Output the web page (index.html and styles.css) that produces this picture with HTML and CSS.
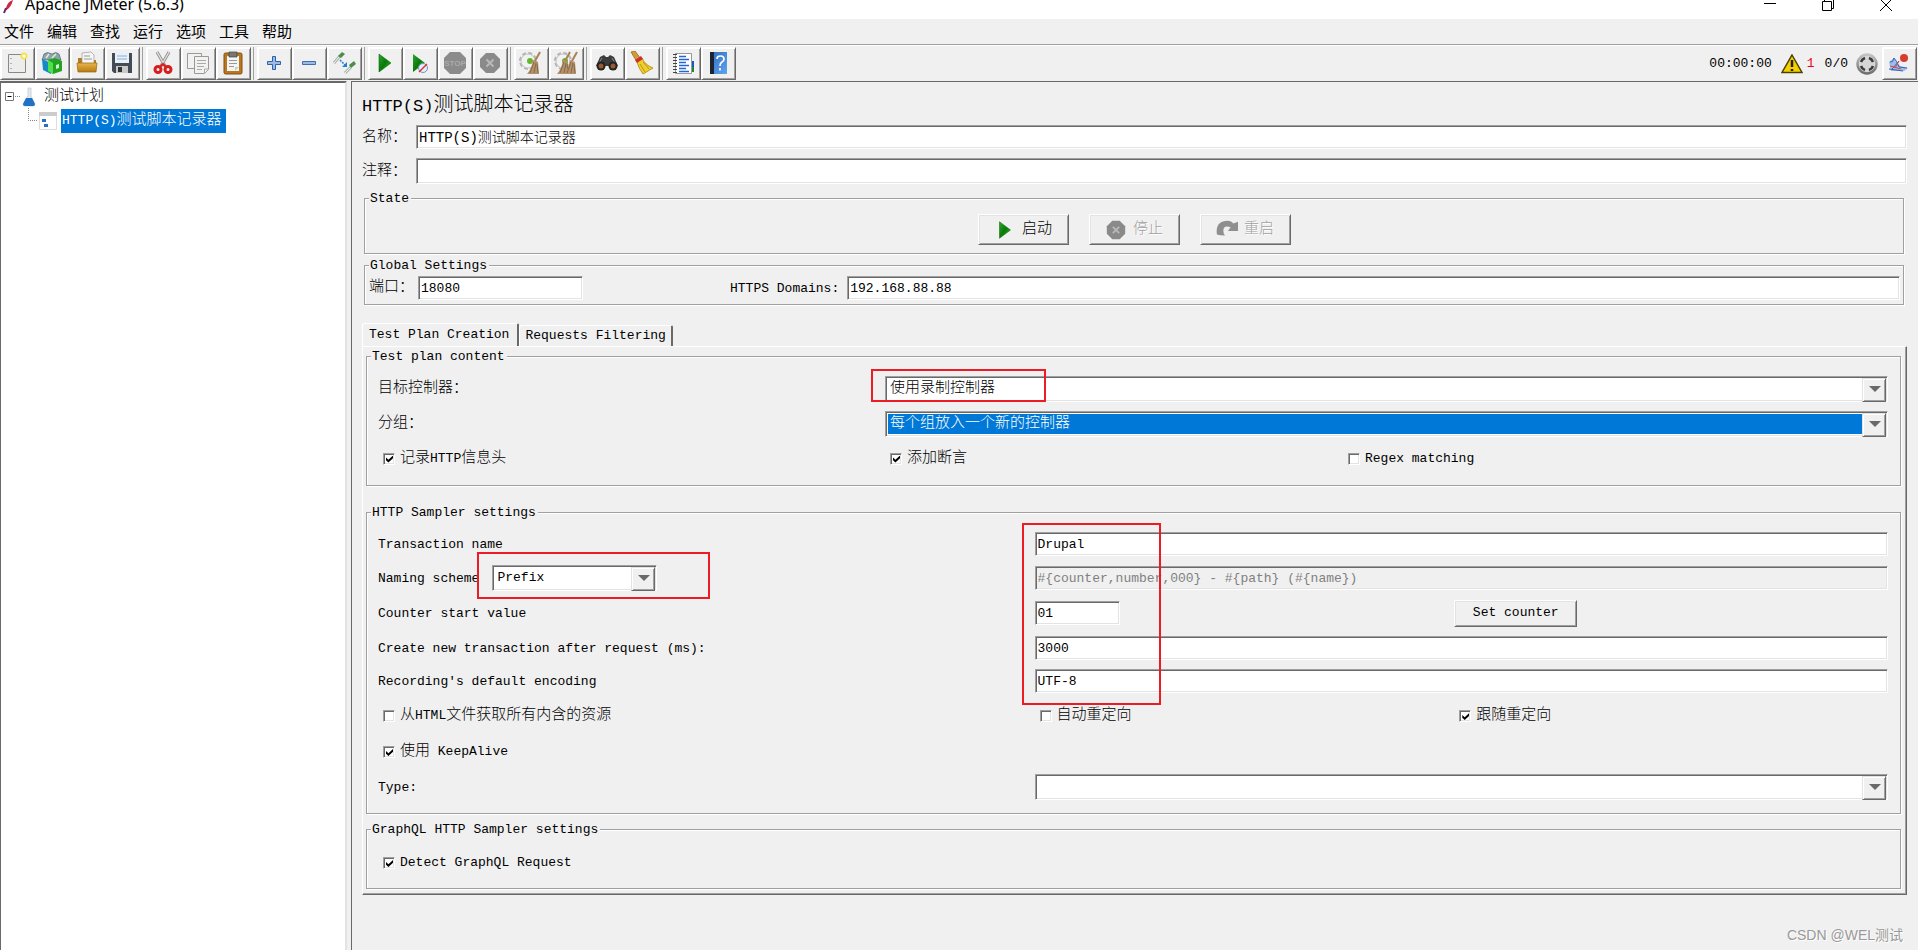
FILE: index.html
```html
<!DOCTYPE html>
<html lang="zh-CN">
<head>
<meta charset="utf-8">
<title>Apache JMeter (5.6.3)</title>
<link rel="stylesheet" href="styles.css">
</head>
<body>
<svg class="defs" aria-hidden="true">
  <defs>
    <linearGradient id="green" x1="0" y1="0" x2="1" y2="1"><stop offset="0" stop-color="#2fa52f"/><stop offset=".5" stop-color="#0a7a0a"/><stop offset="1" stop-color="#1fd01f"/></linearGradient>
    <linearGradient id="gold" x1="0" y1="0" x2="0" y2="1"><stop offset="0" stop-color="#e9b64a"/><stop offset="1" stop-color="#b67a12"/></linearGradient>
    <linearGradient id="blue" x1="0" y1="0" x2="1" y2="1"><stop offset="0" stop-color="#2f6cc0"/><stop offset="1" stop-color="#5fa4ee"/></linearGradient>
    <linearGradient id="metal" x1="0" y1="0" x2="0" y2="1"><stop offset="0" stop-color="#c4c4c4"/><stop offset="1" stop-color="#6e6e6e"/></linearGradient>
    <symbol id="play" viewBox="0 0 24 24"><path d="M6 3 18 12 6 21Z" fill="url(#green)" stroke="#0a6b0a" stroke-width=".6"/></symbol>
    <symbol id="cancel" viewBox="0 0 24 24"><path d="M8 2h8l6 6v8l-6 6H8l-6-6V8Z" fill="#8a8a8a"/><path d="m8.500 8.500 7 7m0-7-7 7" stroke="#b8b8b8" stroke-width="2"/></symbol>
    <symbol id="broom" viewBox="0 0 24 24"><path d="m21 1-5 9" stroke="#a98254" stroke-width="2"/><path d="m14 9 5 2 1 12H8q5-6 6-14Z" fill="#b3916b"/><path d="m15 11-4 11m6-10-2 10m3-9 1 9" stroke="#7d5f40" stroke-width=".8"/></symbol>
    <symbol id="gear" viewBox="0 0 24 24"><circle cx="9" cy="10" r="7" fill="none" stroke="#b4b4b4" stroke-width="4" stroke-dasharray="3.500 2"/><circle cx="9" cy="10" r="7" fill="#f2f2f2" stroke="#c4c4c4"/><circle cx="11" cy="10" r="3" fill="#6ab42d"/></symbol>
  </defs>
</svg>

<div class="window">
  <header class="titlebar">
    <svg class="feather" viewBox="0 0 12 14" aria-hidden="true"><path d="M11 0Q6 1 4 8L3 11Q9 8 11 0Z" fill="#c92a3f"/><path d="M4 8 2 13" stroke="#6a2468" stroke-width="2"/></svg>
    <span class="titlebar-text">Apache JMeter (5.6.3)</span>
    <div class="window-controls">
      <button aria-label="Minimize"><svg viewBox="0 0 14 14"><path d="M1 5.500h12"/></svg></button>
      <button aria-label="Restore"><svg viewBox="0 0 14 14"><path d="M1.500 3.500h9v9h-9ZM3.500 3.500v-2h9v9h-2"/></svg></button>
      <button aria-label="Close"><svg viewBox="0 0 14 14"><path d="m1 1 12 12m0-12L1 13"/></svg></button>
    </div>
  </header>

  <nav class="menubar">
    <button>文件</button><button>编辑</button><button>查找</button><button>运行</button><button>选项</button><button>工具</button><button>帮助</button>
  </nav>

  <div class="toolbar">
    <div class="group">
      <button class="tool" aria-label="New"><svg viewBox="0 0 24 24"><path d="M3.500 3.500h17v18h-17Z" fill="#ededeb" stroke="#888"/><path d="M6 7v12" stroke="#777" stroke-dasharray="1 4"/><circle cx="19" cy="5" r="3.500" fill="#f4e257"/><circle cx="19" cy="5" r="1.500" fill="#fff"/></svg></button>
      <button class="tool" aria-label="Templates"><svg viewBox="0 0 24 24"><path d="M4 3q3-3 8 0 4-3 7 0l2 6H2Z" fill="#8ba5a5" stroke="#456" stroke-width=".6"/><path d="m6 7 3-4m3 4 4-4" stroke="#dfeaea" stroke-width="1.500"/><path d="m2 8 9 4v11l-8-4Z" fill="#168ac4"/><path d="m8 9 7-2 7 3v10l-9 3-5-3Z" fill="#22a322"/><path d="m8 9 5 3v11l-5-3Z" fill="#4fe04f"/><path d="m16 14 3-1v4l-3 1Z" fill="#c9f6c9"/></svg></button>
      <button class="tool" aria-label="Open"><svg viewBox="0 0 24 24"><path d="M3 7h6l2 2h10v12H3Z" fill="#b67c18"/><path d="m7 2 9-1 3 3v9H7Z" fill="#f5f5f5" stroke="#999" stroke-width=".7"/><path d="M9 5h6M9 8h8" stroke="#999"/><path d="M2 12h20l-1 9H3Z" fill="url(#gold)" stroke="#97670f" stroke-width=".7"/></svg></button>
      <button class="tool" aria-label="Save"><svg viewBox="0 0 24 24"><path d="M2 2h20v20H4l-2-2Z" fill="#444b54"/><path d="M5 2h14v10H5Z" fill="#e8f1fa"/><path d="M7 5h10M7 8h10" stroke="#8aaed2"/><path d="M6 15h12v7H6Z" fill="#c9c9c9"/><path d="M8 16h4v5H8Z" fill="#333"/></svg></button>
    </div>
    <div class="group">
      <button class="tool" aria-label="Cut"><svg viewBox="0 0 24 24" fill="none"><path d="m6 1 8 14M18 1l-8 14" stroke="#8a8a8a" stroke-width="3"/><path d="m6 1 8 14M18 1l-8 14" stroke="#ddd" stroke-width="1.500"/><ellipse cx="7" cy="18.500" rx="3" ry="3" stroke="#d91d1d" stroke-width="3"/><ellipse cx="17" cy="18.500" rx="3" ry="3" stroke="#d91d1d" stroke-width="3"/><path d="m9 16 3-3 3 3" stroke="#d91d1d" stroke-width="2"/></svg></button>
      <button class="tool" aria-label="Copy"><svg viewBox="0 0 24 24" fill="#f2f2f0" stroke="#999"><path d="M1.500 2.500h14v15h-14Z"/><path d="M8.500 5.500h14v13l-4 4h-10Z"/><path d="M11 9.500h9m-9 3h9m-9 3h7m-7 3h5M18.500 22v-4h4" stroke="#aaa"/></svg></button>
      <button class="tool" aria-label="Paste"><svg viewBox="0 0 24 24"><rect x="3" y="2" width="18" height="21" rx="1.500" fill="#b9781f" stroke="#805010"/><path d="M6 5h12v15H6Z" fill="#f4f4f2"/><path d="M8 1h8v5H8Z" fill="#777" stroke="#444" stroke-width=".7"/><path d="M8 9.500h8m-8 3h8m-8 3h5" stroke="#999"/><path d="M14 20v-4h4" fill="#ccc"/></svg></button>
    </div>
    <div class="group">
      <button class="tool" aria-label="Expand all"><svg viewBox="0 0 24 24"><path d="M10.500 5.500h3v5h5v3h-5v5h-3v-5h-5v-3h5Z" fill="#9cbbe2" stroke="#2d62ad"/></svg></button>
      <button class="tool" aria-label="Collapse all"><svg viewBox="0 0 24 24"><path d="M5.500 10.500h13v3h-13Z" fill="#9cbbe2" stroke="#3f6fb2"/></svg></button>
      <button class="tool" aria-label="Toggle"><svg viewBox="0 0 24 24"><path d="m2 12 6-7M13 22l6-6" stroke="#a9b8ae" stroke-width="3"/><path d="m2 12 6-7M13 22l6-6" stroke="#f2f5f2"/><path d="m6 5 4-4 3 2-4 4ZM17 14l5-4 2 3-5 4Z" fill="#4c8d47"/><path d="m8 9 5 5" stroke="#287bd8" stroke-width="1.500" stroke-dasharray="2 1"/><path d="M15 16v-5l-5 5Z" fill="#287bd8"/></svg></button>
    </div>
    <div class="group">
      <button class="tool" aria-label="Start"><svg><use href="#play"/></svg></button>
      <button class="tool" aria-label="Start no pauses"><svg viewBox="0 0 24 24"><path d="M5 3 17 12 5 21Z" fill="url(#green)"/><circle cx="15" cy="17" r="4.500" fill="#e5edf7" stroke="#6f95c4"/><path d="m11 21 8-8" stroke="#d33" stroke-width="1.500"/></svg></button>
      <button class="tool" aria-label="Stop" disabled><svg viewBox="0 0 24 24"><path d="M7 1h10l6 6v10l-6 6H7l-6-6V7Z" fill="#8b8b8b"/><text x="12" y="15" class="stop-text">STOP</text></svg></button>
      <button class="tool" aria-label="Shutdown" disabled><svg><use href="#cancel"/></svg></button>
    </div>
    <div class="group">
      <button class="tool" aria-label="Clear"><svg><use href="#gear"/><use href="#broom"/></svg></button>
      <button class="tool" aria-label="Clear all"><svg viewBox="0 0 24 24"><use href="#gear" width="24" height="24"/><use href="#broom" x="-5" width="24" height="24"/><use href="#broom" x="2" width="24" height="24"/></svg></button>
    </div>
    <div class="group">
      <button class="tool" aria-label="Search"><svg viewBox="0 0 24 24"><path d="m5 6 4-2 2 2h2l2-2 4 2 4 9H1Z" fill="#3c3c3c"/><path d="M7 7 4 12m13-5 3 5" stroke="#888"/><circle cx="6" cy="15" r="4.500" fill="#222"/><circle cx="18" cy="15" r="4.500" fill="#222"/><circle cx="6" cy="15" r="2.500" fill="#9b5a2d"/><circle cx="18" cy="15" r="2.500" fill="#9b5a2d"/></svg></button>
      <button class="tool" aria-label="Reset search"><svg viewBox="0 0 24 24"><path d="m1 1 4-1 6 8-4 3Z" fill="#d39a35" stroke="#8d5e16" stroke-width=".7"/><path d="M7 11 12 7q3 7 11 10l-10 6q-4-5-6-12Z" fill="#f0cf2c" stroke="#a98710" stroke-width=".8"/><path d="m5 9 6-4 2 3-6 4Z" fill="#cf2f2a"/><path d="m10 13 5 8m-2-10 6 7" stroke="#b8951a"/></svg></button>
    </div>
    <div class="group">
      <button class="tool" aria-label="Function helper"><svg viewBox="0 0 24 24"><path d="M4.500 2.500h16v20h-16Z" fill="#fff" stroke="#999"/><path d="M4 3v20" stroke="#444" stroke-width="4" stroke-dasharray="1 2"/><path d="M8 5.500h7M8 8.500h10M8 11.500h7M8 14.500h10M8 17.500h7M8 20.500h10" stroke="#2563d8" stroke-width="1.300"/><path d="M21 10h2v6h-2Z" fill="#1b58bb"/><path d="M21 16h2v5h-2Z" fill="#188a3a"/></svg></button>
      <button class="tool" aria-label="Help"><svg viewBox="0 0 24 24"><path d="M4 1h17v22H4Z" fill="url(#blue)"/><path d="M4 1h4v22H4Z" fill="#1c2430"/><path d="M11 8q0-3 3.500-3t3.500 3q0 2-2 3t-2 4M14 17v2.500" fill="none" stroke="#fff" stroke-width="1.700"/></svg></button>
    </div>
    <div class="status">
      <span class="timer">00:00:00</span>
      <svg class="warn" viewBox="0 0 22 20"><path d="M11 1 21 18.500H1Z" fill="#f5cf00" stroke="#4d4100" stroke-width="1.500"/><path d="M11 6v7m0 2v2" stroke="#222" stroke-width="2.500"/></svg>
      <span class="errors">1</span>
      <span class="threads">0/0</span>
      <svg class="remote" viewBox="0 0 24 24"><circle cx="12" cy="12" r="9.500" fill="#d6d6d6" stroke="url(#metal)" stroke-width="2.500"/><path d="M6 10q1-3 4-4M14 6q3 1 4 4M18 14q-1 3-4 4M10 18q-3-1-4-4" fill="none" stroke="#3a3a3a" stroke-width="2.500"/></svg>
      <button class="tool" aria-label="Record"><svg viewBox="0 0 24 24"><path d="m2 11 5-4 6 8 8 2-4 3H4Z" fill="#9dbce8"/><path d="M3 11q3 1 4-4 3 3 5 9l8 1M2 18l14 2M5 18l7-8" fill="none" stroke="#3065b8"/><path d="m3 15 11 3M8 17l4-7" stroke="#d44"/><circle cx="17" cy="7" r="4" fill="#d63d30"/></svg></button>
    </div>
  </div>

  <div class="workspace">
    <aside class="tree">
      <div class="node">
        <svg class="toggle" viewBox="0 0 16 16"><path d="M.5 3.500h8v8h-8Z" fill="#fff" stroke="#777"/><path d="M2.500 7.500h4" stroke="#000"/><path d="M10 7.500h6" stroke="#888" stroke-dasharray="1 1"/></svg>
        <svg class="flask" viewBox="0 0 14 20"><path d="M6 1h3v8l4 8q0 2-2 2H3q-2 0-2-2l5-8Z" fill="#e3e9f0" stroke="#c2cbd5" stroke-width=".8"/><path d="M4 11h6l3 6q0 2-2 2H3q-2 0-2-2Z" fill="#2272c3"/></svg>
        <span>测试计划</span>
      </div>
      <div class="node child">
        <svg class="elbow" viewBox="0 0 10 14"><path d="M.5 0v12.500H10" fill="none" stroke="#888" stroke-dasharray="1 1"/></svg>
        <svg class="sheet" viewBox="0 0 18 18"><path d="M.5.5h17v17H.5Z" fill="#fff" stroke="#ddd"/><path d="M0 0h18v4H0Z" fill="#ccc"/><path d="M3 7h4v3H3Zm2 5h4v3H5Z" fill="#2a6fc0"/></svg>
        <span class="selected"><span class="latin">HTTP(S)</span>测试脚本记录器</span>
      </div>
    </aside>

    <main class="editor">
      <h1><span>HTTP(S)</span>测试脚本记录器</h1>
      <div class="field"><label for="name">名称：</label><input id="name" class="mixed" value="HTTP(S)测试脚本记录器"></div>
      <div class="field comment"><label for="comment">注释：</label><input id="comment"></div>

      <fieldset class="state">
        <legend>State</legend>
        <button class="push"><svg><use href="#play"/></svg>启动</button>
        <button class="push" disabled><svg><use href="#cancel"/></svg>停止</button>
        <button class="push" disabled><svg viewBox="0 0 24 24"><path d="M1 17Q-1 2 13 2q4 0 6 3l5-2v10H13l3-4q-8-3-8 4 0 3 2 5-6 0-9-1Z" fill="#8f8f8f"/></svg>重启</button>
      </fieldset>

      <fieldset class="global">
        <legend>Global Settings</legend>
        <label class="cjk" for="port">端口：</label><input id="port" value="18080">
        <label class="domains-label" for="domains">HTTPS Domains:</label><input id="domains" value="192.168.88.88">
      </fieldset>

      <div class="tabs" role="tablist">
        <button role="tab" aria-selected="true">Test Plan Creation</button>
        <button role="tab" aria-selected="false">Requests Filtering</button>
      </div>
      <section class="pane">
        <fieldset class="content">
          <legend>Test plan content</legend>
          <label class="cjk" for="target">目标控制器：</label>
          <div class="combo wide"><select id="target"><option>使用录制控制器</option></select><i class="mark mark-target"></i></div>
          <label class="cjk" for="grouping">分组：</label>
          <div class="combo wide highlighted"><select id="grouping"><option>每个组放入一个新的控制器</option></select></div>
          <label class="check cjk"><input type="checkbox" checked><span>记录<span class="latin">HTTP</span>信息头</span></label>
          <label class="check cjk"><input type="checkbox" checked>添加断言</label>
          <label class="check"><input type="checkbox">Regex matching</label>
        </fieldset>

        <fieldset class="sampler">
          <legend>HTTP Sampler settings</legend>
          <label for="transaction">Transaction name</label>
          <div class="wide anchor"><input id="transaction" value="Drupal"><i class="mark mark-values"></i></div>
          <div class="naming"><label for="scheme">Naming scheme</label><div class="combo"><select id="scheme"><option>Prefix</option></select></div><i class="mark mark-scheme"></i></div>
          <input class="wide" aria-label="Naming format" value="#{counter,number,000} - #{path} (#{name})" disabled>
          <label for="counter">Counter start value</label>
          <input id="counter" value="01">
          <button class="push set-counter">Set counter</button>
          <label for="delay">Create new transaction after request (ms):</label>
          <input id="delay" class="wide" value="3000">
          <label for="encoding">Recording's default encoding</label>
          <input id="encoding" class="wide" value="UTF-8">
          <label class="check cjk"><input type="checkbox"><span>从<span class="latin">HTML</span>文件获取所有内含的资源</span></label>
          <label class="check cjk"><input type="checkbox">自动重定向</label>
          <label class="check cjk"><input type="checkbox" checked>跟随重定向</label>
          <label class="check cjk keepalive"><input type="checkbox" checked><span>使用<span class="latin"> KeepAlive</span></span></label>
          <label for="type">Type:</label>
          <div class="combo wide"><select id="type"><option></option></select></div>
        </fieldset>

        <fieldset class="graphql">
          <legend>GraphQL HTTP Sampler settings</legend>
          <label class="check"><input type="checkbox" checked>Detect GraphQL Request</label>
        </fieldset>
      </section>
      <div class="watermark">CSDN @WEL测试</div>
    </main>
  </div>
</div>
</body>
</html>
```

FILE: styles.css
```css
:root {
  --face: #f0f0f0;
  --shadow: #a0a0a0;
  --dark: #696969;
  --light: #e3e3e3;
  --select: #0078d7;
  --red: #ed1c24;
}

* { box-sizing: border-box; }

body {
  margin: 0;
  background: var(--face);
  color: #000;
  font: 300 13px/18px "Liberation Mono", "Noto Sans CJK SC", monospace;
}

button, input, select { font: inherit; color: inherit; margin: 0; border-radius: 0; }
.defs { position: absolute; width: 0; height: 0; }
.cjk { font-size: 15px; }
.latin { font-size: 13px; white-space: pre; }

.window { display: flex; flex-direction: column; height: 100vh; overflow: hidden; }

/* Title bar */
.titlebar {
  display: flex;
  align-items: flex-end;
  height: 19px;
  flex: none;
  overflow: hidden;
  background: #fff;
  font: 16px/24px "Noto Sans", sans-serif;
}
.titlebar-text { flex: 1; height: 27px; }
.feather { width: 12px; height: 14px; margin: 0 11px 5px 2px; }
.window-controls { display: flex; gap: 44px; padding-right: 25px; }
.window-controls button { border: 0; padding: 0; background: none; height: 26px; width: 14px; }
.window-controls svg { width: 14px; height: 14px; fill: none; stroke: #000; stroke-width: 1; }

/* Menu bar */
.menubar {
  display: flex;
  gap: 13px;
  flex: none;
  height: 26px;
  padding-left: 4px;
  border-bottom: 1px solid var(--shadow);
}
.menubar button { border: 0; padding: 0 0 2px; background: none; font: 15px/22px "Noto Sans CJK SC", sans-serif; }

/* Tool bar */
.toolbar { display: flex; align-items: flex-start; flex: none; height: 36px; padding-top: 1px; border-top: 1px solid #fff; }
.group { display: flex; }
.group + .group { margin-left: 2px; padding-left: 3px; border-left: 1px solid var(--shadow); }
.tool {
  display: grid;
  place-items: center;
  width: 35px;
  height: 33px;
  padding: 0 2px 1px 0;
  background: var(--face);
  border: 1px solid;
  border-color: #fff var(--dark) var(--dark) #fff;
  box-shadow: inset 1px 1px 0 #fff, inset -1px -1px 0 var(--shadow);
}
.tool svg { width: 24px; height: 24px; }
.stop-text { font: bold 8px "Liberation Sans", sans-serif; fill: #aaa; text-anchor: middle; }
.status { display: flex; align-items: center; margin-left: auto; padding-right: 1px; }
.warn { width: 22px; height: 20px; margin: 0 4px 0 9px; }
.errors { color: #f00020; margin-right: 10px; }
.remote { width: 24px; height: 24px; margin: 0 3px 0 7px; }

/* Split panes */
.workspace { display: flex; flex: 1; min-height: 0; }
.tree {
  flex: 0 0 347px;
  padding: 2px 0 0 4px;
  background: #fff;
  border: 1px solid var(--dark);
  border-width: 2px 0 0 1px;
  border-right: 2px solid var(--light);
  font-size: 15px;
}
.node { display: flex; align-items: center; height: 24px; }
.toggle { width: 16px; height: 16px; }
.flask { width: 14px; height: 20px; margin: 0 8px 0 1px; }
.child { padding-left: 23px; }
.elbow { width: 10px; height: 14px; margin-bottom: 12px; }
.sheet { width: 18px; height: 18px; margin: 0 4px 0 1px; }
.selected { background: var(--select); color: #fff; line-height: 24px; padding: 0 4px 0 1px; }

.editor {
  flex: 1;
  min-width: 0;
  margin-left: 4px;
  padding: 11px 11px 0 10px;
  border: 1px solid var(--dark);
  border-width: 1px 0 0 1px;
  display: flex;
  flex-direction: column;
}
h1 { margin: 0 0 6px; font-size: 20px; font-weight: 300; line-height: 25px; }
h1 span { font-size: 17px; }

/* Text boxes and combo boxes */
input:not([type="checkbox"]), .combo {
  width: 100%;
  min-width: 0;
  height: 24px;
  padding: 0 2px;
  background: #fff;
  border: 1px solid;
  border-color: var(--shadow) #fff #fff var(--shadow);
  box-shadow: inset 1px 1px 0 var(--dark), inset -1px -1px 0 var(--light);
}
input:disabled { background: var(--face) !important; color: #808080; }
input.mixed { font-size: 14px; line-height: 18px; padding-bottom: 3px !important; }
.combo { position: relative; height: 26px; padding: 2px; }
.combo select {
  display: block;
  width: 100%;
  height: 20px;
  padding: 0 24px 0 2px;
  border: 0;
  appearance: none;
  background: #fff;
}
.combo.wide select { font-size: 15px; }
.combo::before {
  content: "";
  position: absolute;
  top: 1px;
  right: 1px;
  width: 22px;
  height: 22px;
  background: var(--face);
  border: 1px solid;
  border-color: var(--light) var(--dark) var(--dark) var(--light);
  box-shadow: inset 1px 1px 0 #fff, inset -1px -1px 0 var(--shadow);
  pointer-events: none;
}
.combo::after {
  content: "";
  position: absolute;
  top: 9px;
  right: 6px;
  border: 6px solid transparent;
  border-top-color: var(--dark);
  border-bottom: 0;
  pointer-events: none;
}
.highlighted select { background: var(--select); color: #fff; }

.field { display: grid; grid-template-columns: 54px 1fr; align-items: center; height: 24px; margin-bottom: 9px; flex: none; }
.field label { font-size: 15px; padding-top: 1px; }
.comment { height: 26px; margin-bottom: 5px; }
.comment input:not([type="checkbox"]) { height: 26px; }

/* Group boxes */
fieldset {
  min-width: 0;
  margin: 0;
  padding: 0;
  border: 1px solid var(--shadow);
  box-shadow: 1px 1px 0 #fff, inset 1px 1px 0 #fff;
}
legend { margin-left: 4px; padding: 0 2px 0 1px; height: 18px; line-height: 20px; background: var(--face); }
.state, .global { margin: 0 3px 0 2px; }
.state { display: flex; justify-content: center; gap: 20px; height: 65px; padding-top: 7px; flex: none; }
.push {
  display: flex;
  align-items: center;
  justify-content: center;
  gap: 6px;
  width: 91px;
  height: 31px;
  padding: 0;
  font-size: 15px;
  background: var(--face);
  border: 1px solid;
  border-color: #fff var(--dark) var(--dark) #fff;
  box-shadow: inset 1px 1px 0 var(--light), inset -1px -1px 0 var(--shadow);
}
.push svg { width: 22px; height: 22px; }
.push:disabled { color: var(--shadow); text-shadow: 1px 1px 0 #fff; }
.global { display: flex; align-items: center; height: 49px; padding: 2px 3px 0 4px; margin-top: 2px; flex: none; }
.global legend { margin-left: 0; }
.global .cjk { width: 49px; }
.global #port { width: 165px; }
.domains-label { margin: 0 8px 0 147px; padding-top: 1px; white-space: nowrap; }
.global #domains { flex: 1; }

/* Tabs */
.tabs { display: flex; align-items: flex-end; margin-top: 18px; height: 23px; flex: none; }
.tabs button {
  height: 21px;
  padding: 0 5px;
  background: var(--face);
  border: 1px solid #fff;
  border-right: 2px solid var(--dark);
  border-bottom: 0;
  border-radius: 3px 2px 0 0;
}
.tabs button[aria-selected="true"] { height: 23px; padding: 0 8px 0 6px; }
.pane {
  padding: 0 5px 5px 3px;
  border: 1px solid;
  border-color: #fff var(--dark) var(--dark) #fff;
  box-shadow: inset -1px -1px 0 var(--shadow);
  flex: none;
}
.pane fieldset { align-items: center; }
.content, .sampler { display: grid; padding: 0 12px 0 11px; }
.pane legend { margin-left: -7px; }
.content { grid-template-columns: 507fr 458fr 545fr; grid-auto-rows: 35px; height: 139px; padding-top: 6px; }
.sampler {
  grid-template-columns: 657fr 420fr 434fr;
  grid-template-rows: 34px 34px 36px 34px 32px 36px 36px 36px;
  height: 311px;
  padding-top: 6px;
  margin-top: 17px;
}
.sampler label { padding-top: 2px; }
.wide { grid-column: 2 / -1; }
.keepalive { grid-column: 1 / -1; }
.sampler #counter { width: 85px; }
.naming { position: relative; display: flex; align-items: center; }
.naming .combo { width: 165px; margin-left: 13px; }
.push.set-counter { width: 123px; height: 27px; font-size: 13px; }
.graphql { height: 69px; margin-top: 6px; padding: 16px 11px 0; }

.check { display: flex; align-items: center; gap: 5px; padding-left: 5px; }
.check input {
  appearance: none;
  width: 12px;
  height: 12px;
  flex: none;
  background: #fff;
  border: 1px solid;
  border-color: var(--shadow) #fff #fff var(--shadow);
  box-shadow: inset 1px 1px 0 var(--dark), inset -1px -1px 0 var(--light);
}
.check input:checked::before {
  content: "";
  display: block;
  width: 7px;
  height: 7px;
  margin: 2px 0 0 2px;
  background: #000;
  clip-path: polygon(0 30%, 35% 60%, 100% 0, 100% 38%, 35% 100%, 0 68%);
}

/* Callout rectangles drawn over the form */
.anchor { position: relative; display: flex; }
.mark { position: absolute; z-index: 1; border: 2px solid var(--red); pointer-events: none; }
.mark-target { left: -15px; top: -8px; width: 175px; height: 33px; }
.mark-values { left: -13px; top: -9px; width: 139px; height: 182px; }
.mark-scheme { left: 99px; top: -13px; width: 233px; height: 47px; }

.watermark {
  margin-top: auto;
  padding: 0 4px 3px;
  text-align: right;
  color: #999;
  text-shadow: 1px 1px 0 #fff;
  font: 14px/24px "Liberation Sans", "Noto Sans CJK SC", sans-serif;
}
```
